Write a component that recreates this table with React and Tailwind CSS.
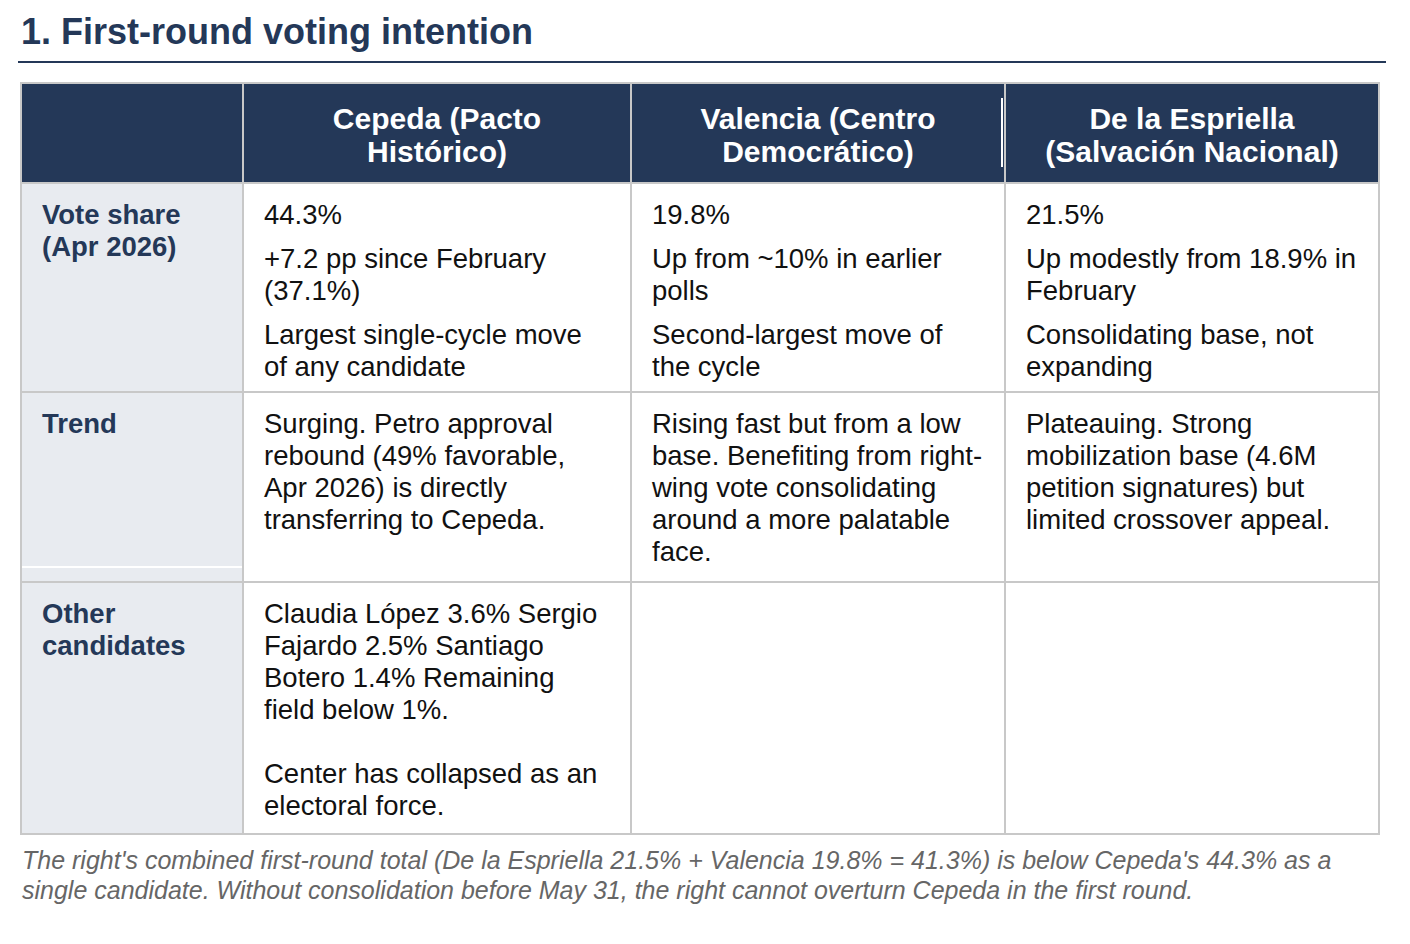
import React from "react";

const navy = "bg-[#243858]";

const rows = [
  {
    label: ["Vote share", "(Apr 2026)"],
    pad: "pt-[15px]",
    cells: [
      ["44.3%", "+7.2 pp since February (37.1%)", "Largest single-cycle move of any candidate"],
      ["19.8%", "Up from ~10% in earlier polls", "Second-largest move of the cycle"],
      ["21.5%", "Up modestly from 18.9% in February", "Consolidating base, not expanding"],
    ],
  },
  {
    label: ["Trend"],
    pad: "pt-[15px]",
    cells: [
      ["Surging. Petro approval rebound (49% favorable, Apr 2026) is directly transferring to Cepeda."],
      ["Rising fast but from a low base. Benefiting from right-wing vote consolidating around a more palatable face."],
      ["Plateauing. Strong mobilization base (4.6M petition signatures) but limited crossover appeal."],
    ],
  },
];

export default function App() {
  return (
    <div className="bg-white min-h-screen px-[18px] pt-[12px] font-['Liberation_Sans',Arial,sans-serif]">
      <h2 className="w-[1368px] pl-[3px] text-[36px] leading-[40px] font-bold text-[#243858] pb-[9px] border-b-2 border-[#243858]">
        1. First-round voting intention
      </h2>

      {/* tabla */}
      <div className="mt-[19px] ml-[2px] w-[1360px] grid grid-cols-[220px_386px_372px_372px] grid-rows-[98px_207px_188px_250px] gap-[2px] bg-[#c8c8c8] border-2 border-[#c8c8c8] text-[27.5px] leading-[32px] text-[#111]">
        <div className={navy} />
        <div className={`${navy} flex items-center justify-center pt-[3px] px-5 text-center text-white font-bold text-[30px] leading-[33px]`}>
          Cepeda (Pacto Histórico)
        </div>
        <div className={`${navy} relative flex items-center justify-center pt-[3px] px-5 text-center text-white font-bold text-[30px] leading-[33px]`}>
          Valencia (Centro Democrático)
          <span className="absolute right-[1px] top-[14px] h-[69px] w-[2px] bg-white" />
        </div>
        <div className={`${navy} flex items-center justify-center pt-[3px] px-5 text-center text-white font-bold text-[30px] leading-[33px]`}>
          De la Espriella (Salvación Nacional)
        </div>

        {rows.map((r, ri) => (
          <React.Fragment key={ri}>
            <div className={`relative bg-[#e8ebf0] px-5 ${r.pad} font-bold text-[#243858]`}>
              {r.label.map((l) => (
                <div key={l}>{l}</div>
              ))}
              {ri === 1 && (
                <span className="absolute left-0 right-0 bottom-[13px] h-[2px] bg-white" />
              )}
            </div>
            {r.cells.map((c, ci) => (
              <div key={ci} className={`bg-white px-5 ${r.pad} space-y-[12px]`}>
                {c.map((t) => (
                  <p key={t}>{t}</p>
                ))}
              </div>
            ))}
          </React.Fragment>
        ))}

        <div className="bg-[#e8ebf0] px-5 pt-[15px] font-bold text-[#243858]">
          <div>Other</div>
          <div>candidates</div>
        </div>
        <div className="bg-white px-5 pt-[15px]">
          <p>Claudia López 3.6% Sergio Fajardo 2.5% Santiago Botero 1.4% Remaining field below 1%.</p>
          <p className="mt-[32px]">Center has collapsed as an electoral force.</p>
        </div>
        <div className="bg-white" />
        <div className="bg-white" />
      </div>

      <p className="mt-[10px] ml-[4px] w-[1362px] text-[25px] leading-[30px] italic text-[#666]">
        The right's combined first-round total (De la Espriella 21.5% + Valencia 19.8% = 41.3%) is below Cepeda's 44.3% as a single candidate. Without consolidation before May 31, the right cannot overturn Cepeda in the first round.
      </p>
    </div>
  );
}
